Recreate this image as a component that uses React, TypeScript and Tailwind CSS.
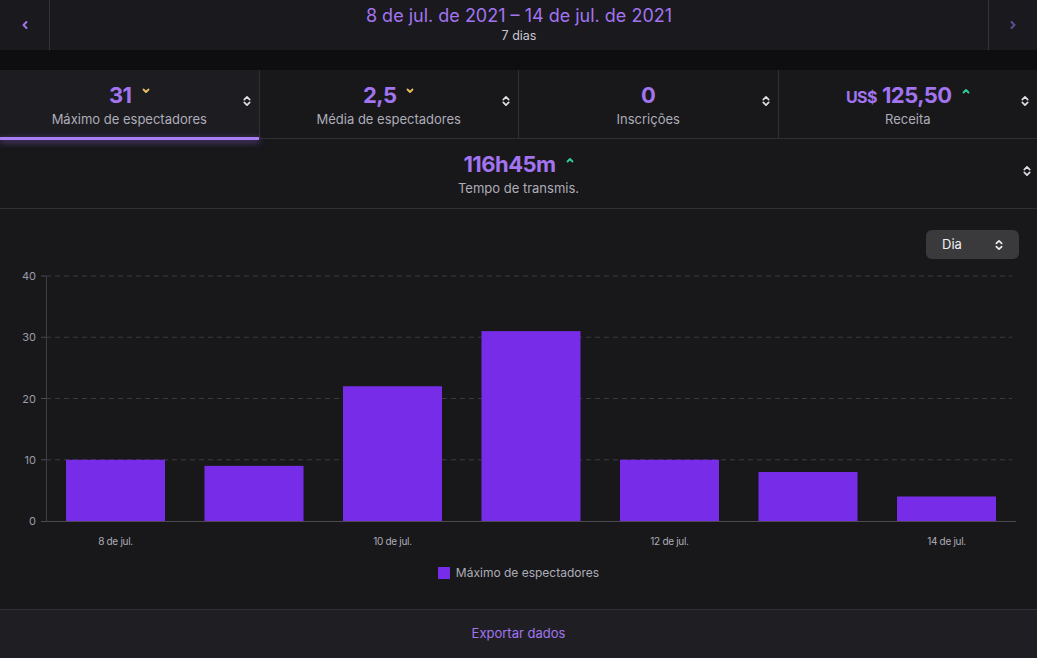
import React from "react";

const bars = [10, 9, 22, 31, 10, 8, 4];
const xLabels: Record<number, string> = { 0: "8 de jul.", 2: "10 de jul.", 4: "12 de jul.", 6: "14 de jul." };

const SortIcon = () => (
  <svg width="8" height="12" viewBox="0 0 8 12" fill="none" stroke="#dedee3" strokeWidth="1.7" strokeLinecap="round" strokeLinejoin="round">
    <path d="M1.3 4.6 4 1.9 6.7 4.6" />
    <path d="M1.3 7.4 4 10.1 6.7 7.4" />
  </svg>
);

const Trend = ({ up }: { up?: boolean }) => (
  <svg width="8" height="6" viewBox="0 0 8 6" fill="none" stroke={up ? "#2dd196" : "#e7c15d"} strokeWidth="1.8" strokeLinecap="round" strokeLinejoin="round">
    {up ? <path d="M1.5 4.5 4 2 6.5 4.5" /> : <path d="M1.5 1.5 4 4 6.5 1.5" />}
  </svg>
);

type Stat = { value: React.ReactNode; label: string; trend?: "up" | "down"; active?: boolean };

const stats: Stat[] = [
  { value: "31", label: "Máximo de espectadores", trend: "down", active: true },
  { value: "2,5", label: "Média de espectadores", trend: "down" },
  { value: "0", label: "Inscrições" },
  {
    value: (
      <>
        <span className="text-[16px] mr-[5px]">US$</span>125,50
      </>
    ),
    label: "Receita",
    trend: "up",
  },
];

const StatTile = ({ s, last }: { s: Stat; last?: boolean }) => (
  <div
    className={`relative flex-1 flex items-center justify-center h-[68px] ${
      last ? "" : "border-r border-[#2f2f35]"
    } ${s.active ? "bg-[#1d1c21]" : ""}`}
  >
    <div className="flex flex-col items-center mt-[4px]">
      <div className="flex items-center gap-[10px] h-[26px]">
        <span className="text-[22px] font-bold text-[#a274f0] leading-none tracking-tight flex items-baseline">{s.value}</span>
        {s.trend && (
          <span className="-mt-[8px]">
            <Trend up={s.trend === "up"} />
          </span>
        )}
      </div>
      <span className="text-[13px] text-[#adadb8] mt-[2px]">{s.label}</span>
    </div>
    <div className="absolute right-[8px] top-[25px]">
      <SortIcon />
    </div>
    {s.active && (
      <div className="absolute left-0 right-0 bottom-[-2px] h-[3px] bg-[#a97ef5] shadow-[0_2px_6px_rgba(169,112,255,0.6)]" />
    )}
  </div>
);

const Chart = () => {
  const y0 = 262;
  const k = 6.125;
  return (
    <svg width="1037" height="294" viewBox="0 0 1037 294" className="block">
      {[40, 30, 20, 10].map((v) => (
        <g key={v}>
          <line x1="46" x2="1012" y1={y0 - v * k} y2={y0 - v * k} stroke="#3a3a40" strokeDasharray="5 4" strokeWidth="1" />
          <line x1="41" x2="46" y1={y0 - v * k} y2={y0 - v * k} stroke="#4a4a50" />
        </g>
      ))}
      {[0, 10, 20, 30, 40].map((v) => (
        <text key={v} x="36" y={y0 - v * k + 4} textAnchor="end" fontSize="11" fill="#9c9ca6" fontFamily="Inter, sans-serif">
          {v}
        </text>
      ))}
      <line x1="46.5" x2="46.5" y1="17" y2={y0} stroke="#3e3e44" />
      {bars.map((v, i) => (
        <rect key={i} x={66 + i * 138.5} y={y0 - v * k} width="99" height={v * k} fill="#772ce8" />
      ))}
      <line x1="41" x2="1016" y1={y0 + 0.5} y2={y0 + 0.5} stroke="#4a4a50" />
      {bars.map((_, i) =>
        xLabels[i] ? (
          <text key={i} x={115.5 + i * 138.5} y={y0 + 24} textAnchor="middle" fontSize="10" fill="#adadb8" fontFamily="Inter, sans-serif" letterSpacing="-0.3">
            {xLabels[i]}
          </text>
        ) : null
      )}
    </svg>
  );
};

export default function App() {
  return (
    <div className="w-[1037px] h-[658px] bg-[#18181b] font-['Inter',sans-serif] overflow-hidden flex flex-col">
      {/* date header */}
      <div className="h-[50px] flex bg-[#1a191e]">
        <button className="w-[50px] border-r border-[#34343a] flex items-center justify-center">
          <svg width="8" height="10" viewBox="0 0 8 10" fill="none" stroke="#a274f0" strokeWidth="2" strokeLinecap="round" strokeLinejoin="round">
            <path d="M5.5 2 2.5 5 5.5 8" />
          </svg>
        </button>
        <div className="flex-1 flex flex-col items-center justify-center">
          <span className="text-[18px] text-[#a274f0] leading-[22px] -mt-[1px]">8 de jul. de 2021 – 14 de jul. de 2021</span>
          <span className="text-[12.5px] text-[#c8c8d0] leading-[16px] mt-[1px]">7 dias</span>
        </div>
        <button className="w-[49px] border-l border-[#34343a] flex items-center justify-center">
          <svg width="8" height="10" viewBox="0 0 8 10" fill="none" stroke="#5e4f95" strokeWidth="2" strokeLinecap="round" strokeLinejoin="round">
            <path d="M2.5 2 5.5 5 2.5 8" />
          </svg>
        </button>
      </div>
      <div className="h-[20px] bg-[#0e0e10]" />

      {/* stats */}
      <div className="flex border-b border-[#2f2f35]">
        {stats.map((s, i) => (
          <StatTile key={i} s={s} last={i === stats.length - 1} />
        ))}
      </div>
      <div className="relative h-[70px] border-b border-[#2f2f35] flex items-center justify-center">
        <div className="flex flex-col items-center mt-[2px]">
          <div className="flex items-center gap-[10px] h-[26px]">
            <span className="text-[22px] font-bold text-[#a274f0] leading-none tracking-tight">116h45m</span>
            <span className="-mt-[8px]">
              <Trend up />
            </span>
          </div>
          <span className="text-[13px] text-[#adadb8] mt-[2px]">Tempo de transmis.</span>
        </div>
        <div className="absolute right-[6px] top-[26px]">
          <SortIcon />
        </div>
      </div>

      {/* chart */}
      <div className="flex-1 flex flex-col">
        <div className="flex justify-end pt-[21px] pr-[18px]">
          <div className="w-[93px] h-[29px] rounded-md bg-[#3a3a3d] flex items-center justify-between pl-[16px] pr-[16px]">
            <span className="text-[13px] text-[#efeff1]">Dia</span>
            <svg width="8" height="12" viewBox="0 0 8 12" fill="none" stroke="#efeff1" strokeWidth="1.6" strokeLinecap="round" strokeLinejoin="round">
              <path d="M1.3 4.4 4 1.8 6.7 4.4" />
              <path d="M1.3 7.6 4 10.2 6.7 7.6" />
            </svg>
          </div>
        </div>
        <Chart />
        <div className="flex items-center justify-center gap-[6px] mt-[11px]">
          <span className="w-[12px] h-[12px] bg-[#772ce8]" />
          <span className="text-[12px] text-[#adadb8]">Máximo de espectadores</span>
        </div>
      </div>

      {/* footer */}
      <div className="h-[49px] border-t border-[#2f2f35] bg-[#1f1f23] flex items-center justify-center">
        <span className="text-[13px] text-[#a274f0]">Exportar dados</span>
      </div>
    </div>
  );
}
